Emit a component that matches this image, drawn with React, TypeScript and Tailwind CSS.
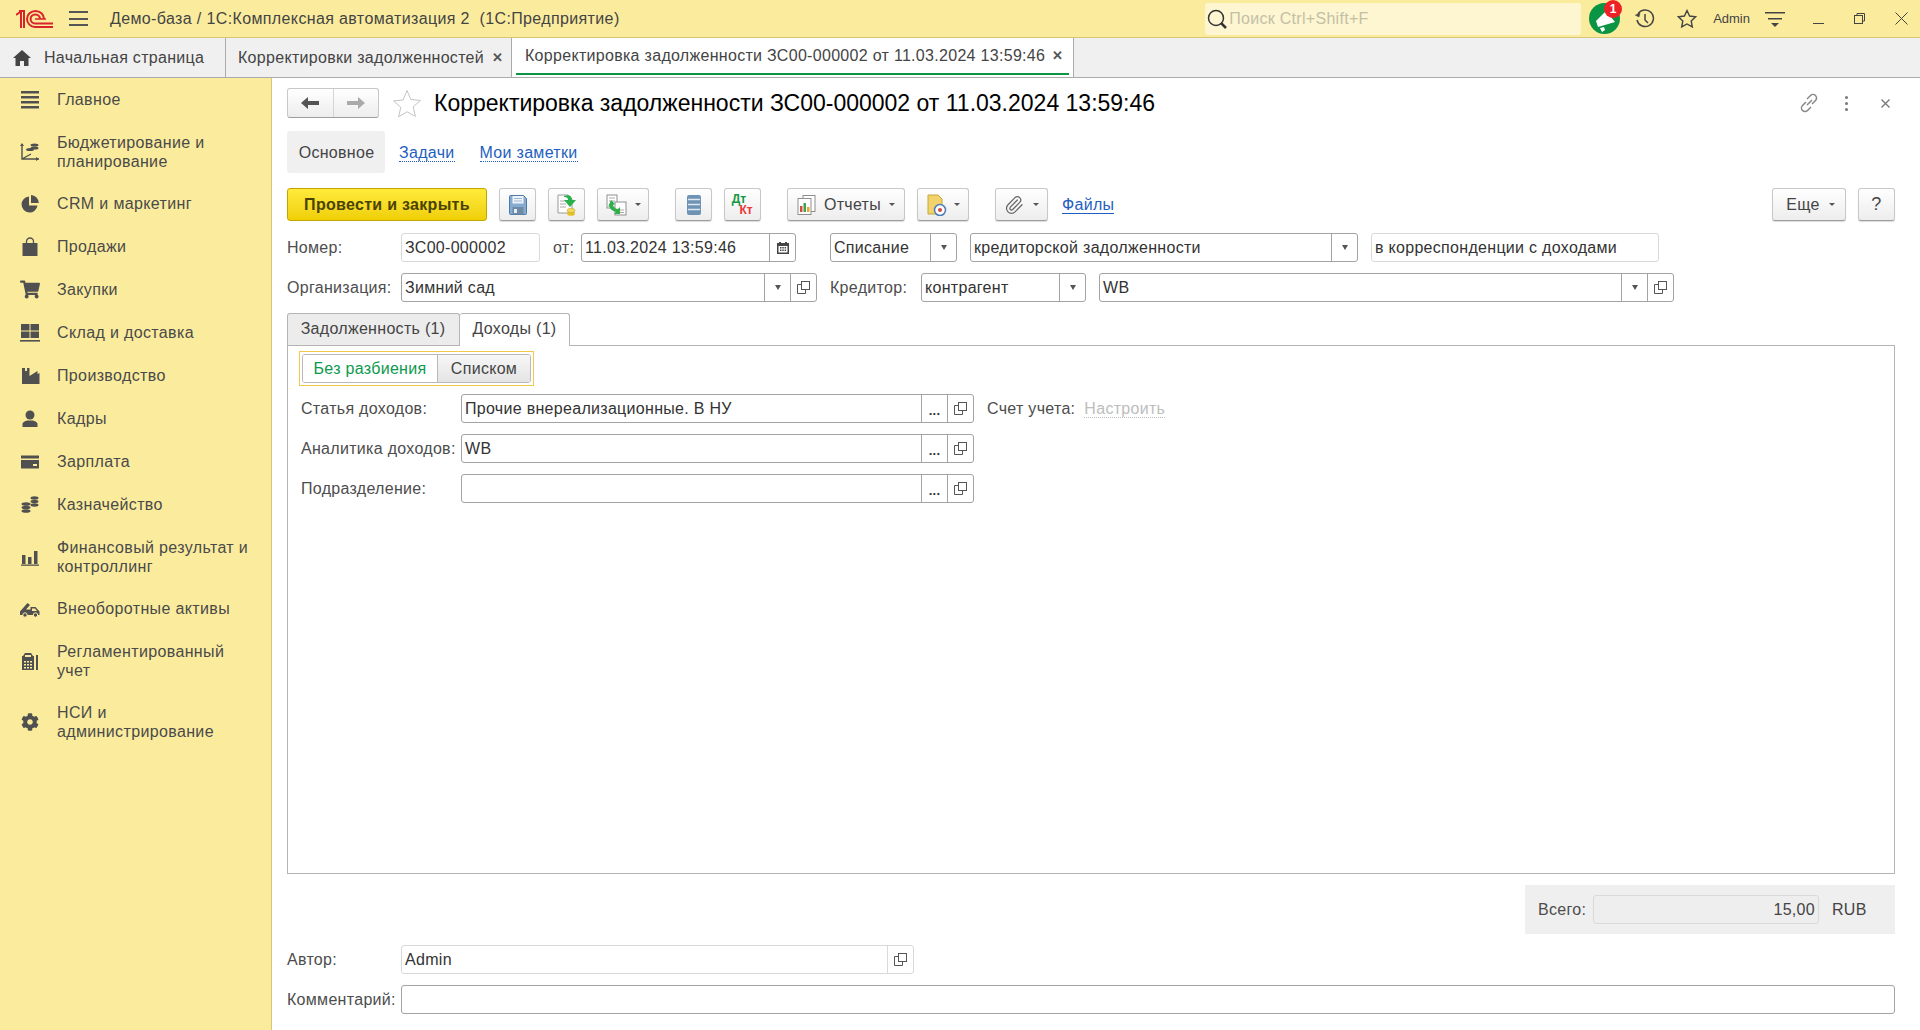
import { FaCog, FaShoppingCart } from "react-icons/fa";
import { Paperclip } from "lucide-react";
import type { ReactNode } from "react";

const navItems = [
  { label: ["Главное"], icon: "menu" },
  { label: ["Бюджетирование и", "планирование"], icon: "budget" },
  { label: ["CRM и маркетинг"], icon: "pie" },
  { label: ["Продажи"], icon: "bag" },
  { label: ["Закупки"], icon: "cart" },
  { label: ["Склад и доставка"], icon: "stock" },
  { label: ["Производство"], icon: "factory" },
  { label: ["Кадры"], icon: "person" },
  { label: ["Зарплата"], icon: "card" },
  { label: ["Казначейство"], icon: "coins" },
  { label: ["Финансовый результат и", "контроллинг"], icon: "bars" },
  { label: ["Внеоборотные активы"], icon: "truck" },
  { label: ["Регламентированный", "учет"], icon: "calc" },
  { label: ["НСИ и", "администрирование"], icon: "gear" },
];

function NavIcon({ name }: { name: string }) {
  if (name === "cart") return <FaShoppingCart className="h-[19px] w-[20px] text-[#505050]" />;
  if (name === "gear") return <FaCog className="ml-[1px] h-[18px] w-[18px] text-[#505050]" />;
  return (
    <svg viewBox="0 0 20 20" className="h-5 w-5 shrink-0" fill="#505050">
      {name === "menu" && (
        <>
          <rect x="1" y="1" width="18" height="2.500" />
          <rect x="1" y="6" width="18" height="2.500" />
          <rect x="1" y="11" width="18" height="2.500" />
          <rect x="1" y="16" width="18" height="2.500" />
        </>
      )}
      {name === "budget" && (
        <>
          <path d="M2 2v15h17M2 17l9-5" fill="none" stroke="#505050" strokeWidth="1.400" />
          <path d="M0 4l2-3 2 3zM16 15l3 2-3 2z" />
          <ellipse cx="14.500" cy="3" rx="4" ry="1.600" />
          <ellipse cx="14.500" cy="6" rx="4" ry="1.600" />
          <ellipse cx="10" cy="7.500" rx="4" ry="1.600" />
        </>
      )}
      {name === "pie" && (
        <>
          <path d="M9 2.500a8 8 0 1 0 8.500 9H9z" />
          <path d="M11 1a8 8 0 0 1 7.800 8H11z" />
        </>
      )}
      {name === "bag" && (
        <>
          <rect x="2.500" y="6" width="15" height="13" />
          <path d="M6.500 8V4.500a3.500 3.500 0 0 1 7 0V8" fill="none" stroke="#505050" strokeWidth="1.300" />
        </>
      )}
      {name === "stock" && (
        <>
          <rect x="1" y="1" width="8.500" height="6.500" />
          <rect x="10.500" y="1" width="8.500" height="6.500" />
          <rect x="1" y="8.500" width="8.500" height="6.500" />
          <rect x="10.500" y="8.500" width="8.500" height="6.500" />
          <rect x="0" y="17" width="20" height="1.600" />
        </>
      )}
      {name === "factory" && <path d="M2 18V2h3v3h2V2h2.500v8l8-5v3l2-1v11z" />}
      {name === "person" && (
        <>
          <circle cx="10" cy="6" r="4.500" />
          <path d="M2.500 18v-3c0-2 3-3 4.500-3.500h6c1.500.5 4.500 1.500 4.500 3.500v3z" />
        </>
      )}
      {name === "card" && (
        <>
          <path d="M1 3.500h18v3H1z" />
          <path d="M1 8h18v8.500H1zM13 12v2h4v-2z" fillRule="evenodd" />
        </>
      )}
      {name === "coins" && (
        <>
          <ellipse cx="14.500" cy="3" rx="4" ry="1.700" />
          <ellipse cx="14.500" cy="6.500" rx="4" ry="1.700" />
          <ellipse cx="14.500" cy="10" rx="4" ry="1.700" />
          <ellipse cx="6" cy="9" rx="4.500" ry="1.800" />
          <ellipse cx="6" cy="12.500" rx="4.500" ry="1.800" />
          <ellipse cx="6" cy="16" rx="4.500" ry="1.800" />
        </>
      )}
      {name === "bars" && (
        <>
          <rect x="2" y="8" width="3.500" height="9" />
          <rect x="8" y="10" width="3.500" height="7" />
          <rect x="14" y="4" width="3.500" height="13" />
          <rect x="1" y="17.500" width="18" height="1.300" />
        </>
      )}
      {name === "truck" && (
        <>
          <path d="M0 12.500L7.500 4 10 6 6 10.500h4.500V8h5l4 4.500V16H0z" />
          <path d="M12 9.500h3l2 2.500h-5z" fill="#fbec9d" />
          <circle cx="5" cy="16" r="2.200" stroke="#fbec9d" />
          <circle cx="15.500" cy="16" r="2.200" stroke="#fbec9d" />
        </>
      )}
      {name === "calc" && (
        <>
          <path d="M3 5l2-3h6l2 3h1v14H2V5z" />
          <rect x="5" y="4" width="6" height="2" fill="#fbec9d" />
          <path d="M4 10h2v1.500H4zM7 10h2v1.500H7zM10 10h2v1.500h-2zM4 13h2v1.500H4zM7 13h2v1.500H7zM10 13h2v1.500h-2zM4 16h2v1.500H4zM7 16h2v1.500H7zM10 16h2v1.500h-2z" fill="#fbec9d" />
          <rect x="16" y="4" width="2" height="15" />
        </>
      )}
    </svg>
  );
}

function CopyIcon() {
  return (
    <svg viewBox="0 0 13 13" className="h-[13px] w-[13px]" fill="none" stroke="#555" strokeWidth="1">
      <rect x="4.500" y="0.500" width="8" height="8" />
      <path d="M4.500 3.500h-4v9h8v-4" />
    </svg>
  );
}

function Caret() {
  return <span className="h-0 w-0 border-x-[3.500px] border-t-[5px] border-x-transparent border-t-[#555]" />;
}

function SmallCaret() {
  return <span className="h-0 w-0 border-x-[3px] border-t-[3px] border-x-transparent border-t-[#555]" />;
}

function FieldPart({ className, children }: { className: string; children: ReactNode }) {
  return <span className={`flex h-full shrink-0 items-center justify-center border-l border-inherit ${className}`}>{children}</span>;
}

function Field({
  className,
  text,
  light,
  parts,
}: {
  className: string;
  text?: string;
  light?: boolean;
  parts?: ReactNode;
}) {
  return (
    <div
      className={`flex h-[29px] shrink-0 items-center rounded-[3px] border bg-white text-[#333] ${
        light ? "border-[#d9d9d9]" : "border-[#a3a3a3]"
      } ${className}`}
    >
      <span className="min-w-0 flex-1 truncate pl-[3px] leading-[20px]">{text}</span>
      {parts}
    </div>
  );
}

const dropPart = (
  <FieldPart className="w-[26px]">
    <Caret />
  </FieldPart>
);
const copyPart = (
  <FieldPart className="w-[26px]">
    <CopyIcon />
  </FieldPart>
);
const dotsPart = (
  <FieldPart className="w-[26px] items-end pb-[5px] text-[13px] font-bold leading-none">...</FieldPart>
);

function ToolButton({ className, children }: { className: string; children: ReactNode }) {
  return (
    <button className={`flex h-[33px] shrink-0 items-center justify-center rounded-[3px] border border-[#c8c8c8] border-b-[#9e9e9e] bg-linear-to-b from-white to-[#ededed] text-[#444] shadow-[0_1px_1px_rgba(0,0,0,0.15)] ${className}`}>
      {children}
    </button>
  );
}

function Label({ className, children }: { className: string; children: ReactNode }) {
  return <span className={`shrink-0 whitespace-nowrap text-[#4d4d4d] ${className}`}>{children}</span>;
}

export default function App() {
  return (
    <div className="flex h-[1030px] w-[1920px] flex-col overflow-hidden bg-white font-['Liberation_Sans',Arial,sans-serif] text-[16px] tracking-[0.3px]">
      {/* top bar */}
      <header className="relative flex h-[38px] shrink-0 items-center border-b border-[#d6c678] bg-[#fbec9d] text-[#444]">
        <svg viewBox="0 0 37 18" className="ml-4 h-[18px] w-[37px]" fill="none" stroke="#d8242a" strokeWidth="2">
          <path d="M0 5l5-3.500V18M3 1h5v17" />
          <path d="M28 9A8.500 8 0 0 0 11 9a8 8 0 0 0 8 8h18" />
          <path d="M24 9a4.700 4.500 0 0 0-9.400 0 4.500 4.500 0 0 0 4.400 4.500h18" />
          <path d="M19 9h11" strokeWidth="1.500" />
        </svg>
        <span className="ml-[16px] flex h-[15px] w-[19px] flex-col justify-between">
          <span className="h-[2px] bg-[#555]" />
          <span className="h-[2px] bg-[#555]" />
          <span className="h-[2px] bg-[#555]" />
        </span>
        <span className="ml-[22px] whitespace-pre tracking-[0.37px]">Демо-база / 1С:Комплексная автоматизация 2  (1С:Предприятие)</span>

        <div className="ml-auto flex h-full items-center">
          <div className="flex h-[32px] w-[376px] items-center rounded-[3px] bg-[#fdf6d1]">
            <svg viewBox="0 0 20 20" className="ml-[2px] h-5 w-5" fill="none" stroke="#333">
              <circle cx="9" cy="9" r="7.500" strokeWidth="1.500" />
              <path d="M14 14l5 5" strokeWidth="2.500" />
            </svg>
            <span className="ml-[2px] text-[#c4c0a6]">Поиск Ctrl+Shift+F</span>
          </div>
          <div className="relative ml-[8px] h-[31px] w-[31px] rounded-full bg-[#0a9444]">
            <svg viewBox="0 0 31 31" className="h-[31px] w-[31px]" fill="white">
              <path d="M17 8L7 18l2 6 17-5z" />
              <path d="M11 25l4-1 1 3-3 2z" />
            </svg>
            <span className="absolute -right-[2px] -top-[3px] flex h-[18px] w-[18px] items-center justify-center rounded-full bg-[#ee2127] text-[12px] font-bold leading-none text-white">
              1
            </span>
          </div>
          <svg viewBox="0 0 20 20" className="ml-[15px] h-5 w-5" fill="none" stroke="#444" strokeWidth="1.500">
            <path d="M3 5a8.300 8.300 0 1 1-1 6" />
            <path d="M0 6l4 2 1-4" fill="#444" strokeWidth="0.500" />
            <path d="M10 5v6l3 3" />
          </svg>
          <svg viewBox="0 0 20 20" className="ml-[22px] h-5 w-5" fill="none" stroke="#444" strokeWidth="1.400">
            <path d="M10 1.500l2.600 5.500 6 .8-4.400 4.100 1.100 6L10 15l-5.300 2.900 1.100-6L1.400 7.800l6-.8z" />
          </svg>
          <span className="ml-[16px] text-[13px] leading-none tracking-normal">Admin</span>
          <svg viewBox="0 0 20 16" className="ml-[15px] h-4 w-5" fill="#444">
            <rect x="0" y="1" width="20" height="1.500" />
            <rect x="3" y="7" width="14" height="1.500" />
            <path d="M6 12h8l-4 4z" />
          </svg>
          <span className="ml-[28px] mt-[10px] h-[1px] w-[11px] bg-[#444]" />
          <svg viewBox="0 0 11 11" className="ml-[30px] h-[11px] w-[11px]" fill="none" stroke="#444">
            <rect x="0.500" y="2.500" width="8" height="8" />
            <path d="M3 2.500V.500h7.500v7.500H8.500" />
          </svg>
          <svg viewBox="0 0 13 13" className="ml-[30px] mr-[12px] h-[13px] w-[13px]" fill="none" stroke="#444">
            <path d="M.500.500l12 12M12.500.500l-12 12" />
          </svg>
        </div>
      </header>

      {/* open tabs */}
      <nav className="flex h-[40px] shrink-0 border-b border-[#ababab] bg-[#f0f0f0] text-[#444]">
        <div className="flex w-[226px] items-center border-r border-[#ababab]">
          <svg viewBox="0 0 18 16" className="ml-[13px] h-4 w-[18px]" fill="#444">
            <path d="M9 0l9 8h-2.500v8H11v-5H7v5H2.500V8H0z" />
          </svg>
          <span className="ml-[13px]">Начальная страница</span>
        </div>
        <div className="flex w-[286px] items-center border-r border-[#ababab] pl-[12px]">
          <span>Корректировки задолженностей</span>
          <span className="ml-[8px] text-[13px] font-bold leading-none text-[#555]">✕</span>
        </div>
        <div className="w-[562px] border-r border-[#ababab] bg-white px-[4px] pb-[2px]">
          <div className="flex h-full items-center border-b-[2px] border-[#0a9444] pl-[9px]">
            <span className="whitespace-nowrap">Корректировка задолженности ЗС00-000002 от 11.03.2024 13:59:46</span>
            <span className="ml-[7px] text-[13px] font-bold leading-none text-[#555]">✕</span>
          </div>
        </div>
      </nav>

      <div className="flex min-h-0 flex-1">
        {/* section menu */}
        <aside className="w-[272px] shrink-0 border-r border-[#d6c678] bg-[#fbec9d] tracking-[0.36px] text-[#4a4a4a]">
          {navItems.map((item) => (
            <div
              key={item.label[0]}
              className={`flex items-center pl-[20px] pt-[12px] ${item.label.length > 1 ? "pb-[11px]" : "pb-[12px]"}`}
            >
              <span className="flex h-[19px] w-[37px] shrink-0 items-center">
                <NavIcon name={item.icon} />
              </span>
              <span className="leading-[19px]">
                {item.label.map((line) => (
                  <span key={line} className="block whitespace-nowrap">
                    {line}
                  </span>
                ))}
              </span>
            </div>
          ))}
        </aside>

        {/* document form */}
        <main className="flex min-w-0 flex-1 flex-col pl-[15px] pr-[25px] pt-[10px]">
          <div className="flex h-[30px] shrink-0 items-center">
            <div className="flex h-[30px] w-[92px] rounded-[3px] border border-[#c8c8c8] border-b-[#9e9e9e] bg-linear-to-b from-white to-[#ededed]">
              <span className="flex flex-1 items-center justify-center border-r border-[#d5d5d5] text-[#555]">
                <svg viewBox="0 0 18 12" className="h-3 w-[18px]" fill="currentColor">
                  <path d="M0 6l7-6v4h11v4H7v4z" />
                </svg>
              </span>
              <span className="flex flex-1 items-center justify-center">
                <svg viewBox="0 0 18 12" className="h-3 w-[18px]" fill="#aaa">
                  <path d="M18 6l-7-6v4H0v4h11v4z" />
                </svg>
              </span>
            </div>
            <svg viewBox="0 0 30 29" className="ml-[13px] h-[29px] w-[30px]" fill="none" stroke="#c4c4c4">
              <path d="M15 1.500l3.900 9 9.600.9-7.300 6.400 2.200 9.500L15 22.800l-8.400 5 2.200-9.500-7.300-6.400 9.600-.9z" />
            </svg>
            <h1 className="ml-[12px] whitespace-nowrap text-[23px] font-normal leading-none tracking-normal text-black">
              Корректировка задолженности ЗС00-000002 от 11.03.2024 13:59:46
            </h1>
            <div className="ml-auto flex items-center text-[#888]">
              <svg viewBox="0 0 20 20" className="h-5 w-5" fill="none" stroke="#888" strokeWidth="1.500">
                <path d="M8 12l5-5M7 9l-3.500 3.500a3.500 3.500 0 0 0 5 5L12 14M13 11l3.500-3.500a3.500 3.500 0 0 0-5-5L8 6" />
              </svg>
              <span className="ml-[26px] flex flex-col gap-[3px]">
                <span className="h-[3px] w-[3px] rounded-full bg-[#777]" />
                <span className="h-[3px] w-[3px] rounded-full bg-[#777]" />
                <span className="h-[3px] w-[3px] rounded-full bg-[#777]" />
              </span>
              <svg viewBox="0 0 9 9" className="ml-[33px] mr-[5px] h-[9px] w-[9px]" fill="none" stroke="#777" strokeWidth="1.300">
                <path d="M.500.500l8 8M8.500.500l-8 8" />
              </svg>
            </div>
          </div>

          <div className="mt-[13px] flex h-[42px] shrink-0 items-center">
            <span className="flex h-full w-[98px] items-center justify-center rounded-[3px] bg-[#f0f0f0] pl-[1px] pt-[1px] text-[#444]">Основное</span>
            <a className="ml-[14px] mt-[2px] border-b border-dotted border-[#1f5fc0] leading-[17px] text-[#1f5fc0]">Задачи</a>
            <a className="ml-[25px] mt-[2px] border-b border-dotted border-[#1f5fc0] leading-[17px] text-[#1f5fc0]">Мои заметки</a>
          </div>

          {/* toolbar */}
          <div className="mt-[15px] flex h-[33px] shrink-0 items-center">
            <button className="flex h-[33px] w-[200px] items-center justify-center rounded-[3px] border border-[#c2a600] bg-linear-to-b from-[#ffeb3a] to-[#f0cf00] font-bold text-[#4a4300]">
              Провести и закрыть
            </button>
            <ToolButton className="ml-[12px] w-[37px]">
              <svg viewBox="0 0 18 20" className="h-5 w-[18px]">
                <path d="M1.500.5h13l3 3v15a1 1 0 0 1-1 1h-15a1 1 0 0 1-1-1v-17a1 1 0 0 1 1-1z" fill="#86abd3" stroke="#4f7aa8" />
                <rect x="3.500" y="1" width="11" height="7.500" fill="#eef3f9" />
                <path d="M5 3.500h8M5 6h8" stroke="#9db8d4" />
                <rect x="3.500" y="12" width="11" height="7.500" fill="#6f8aa5" />
                <rect x="5" y="14" width="3" height="4" fill="#e5edf5" />
              </svg>
            </ToolButton>
            <ToolButton className="ml-[12px] w-[37px]">
              <svg viewBox="0 0 20 22" className="h-[22px] w-5">
                <path d="M1 1h10l4 4v14H1z" fill="#fff" stroke="#999" />
                <path d="M3 7h6M3 10h6M3 13h6" stroke="#a9a9a9" />
                <ellipse cx="14" cy="19.500" rx="4" ry="2.300" fill="#e6c12c" />
                <ellipse cx="14" cy="16.500" rx="4" ry="2.200" fill="#f1d860" stroke="#c29f12" strokeWidth="0.500" />
                <path d="M7 2c5-2 8 0 8 4h4l-6 7-6-7h4c0-2-1-3-4-3z" fill="#27b04b" />
              </svg>
            </ToolButton>
            <ToolButton className="ml-[12px] w-[52px] gap-[8px]">
              <svg viewBox="0 0 21 22" className="h-[22px] w-[21px]">
                <rect x="1" y="1" width="10" height="13" fill="#fff" stroke="#8f8f8f" />
                <path d="M3 4h6M3 7h6" stroke="#aaa" />
                <rect x="9" y="8" width="11" height="13" fill="#fff" stroke="#8f8f8f" />
                <path d="M12 16h6M12 18.500h6" stroke="#aaa" />
                <path d="M5 6l4 4-2 1c1 3 3 4 5 4l2-2v7h-6l2-2c-4-1-6-3-7-6l-1 1z" fill="#2fae4a" />
              </svg>
              <SmallCaret />
            </ToolButton>
            <ToolButton className="ml-[26px] w-[37px]">
              <svg viewBox="0 0 14 20" className="h-5 w-[14px]">
                <rect x="0" y="0" width="14" height="20" rx="2" fill="#6f93b5" />
                <path d="M1 4.500h12M1 9.500h12M1 14.500h12" stroke="#dfe8f0" strokeWidth="1.600" />
              </svg>
            </ToolButton>
            <ToolButton className="ml-[12px] w-[37px]">
              <span className="flex flex-col items-center text-[12px] font-bold leading-[11px] tracking-normal">
                <span className="mr-[7px] text-[#11993f]">Дт</span>
                <span className="ml-[7px] text-[#ee3838]">Кт</span>
              </span>
            </ToolButton>
            <ToolButton className="ml-[26px] w-[118px]">
              <svg viewBox="0 0 20 20" className="h-5 w-5">
                <rect x="6" y="0.500" width="12" height="16" fill="#fff" stroke="#8f8f8f" />
                <rect x="1" y="3.500" width="13" height="16" fill="#fff" stroke="#8f8f8f" />
                <rect x="3" y="11" width="2.500" height="6" fill="#d94a3a" />
                <rect x="6.500" y="8" width="2.500" height="9" fill="#3aa655" />
                <rect x="10" y="12" width="2.500" height="5" fill="#e0a82c" />
              </svg>
              <span className="ml-[7px]">Отчеты</span>
              <span className="ml-[8px] flex">
                <SmallCaret />
              </span>
            </ToolButton>
            <ToolButton className="ml-[12px] w-[52px] gap-[7px]">
              <svg viewBox="0 0 20 22" className="h-[22px] w-5">
                <path d="M1 1h10l4 4v15H1z" fill="#f2d26b" stroke="#c7a63a" />
                <circle cx="13" cy="16" r="5.500" fill="#fff" stroke="#4b7fb5" strokeWidth="1.500" />
                <circle cx="13" cy="16" r="2" fill="#d9483b" />
              </svg>
              <SmallCaret />
            </ToolButton>
            <ToolButton className="ml-[26px] w-[53px] gap-[9px]">
              <Paperclip className="h-5 w-5 text-[#666]" strokeWidth={1.5} />
              <SmallCaret />
            </ToolButton>
            <a className="ml-[14px] border-b border-[#1f5fc0] leading-[17px] text-[#1f5fc0]">Файлы</a>
            <ToolButton className="ml-auto w-[74px] gap-[9px] pl-[3px]">
              Еще
              <SmallCaret />
            </ToolButton>
            <ToolButton className="ml-[12px] w-[37px] text-[18px] text-[#333]">?</ToolButton>
          </div>

          {/* header fields */}
          <div className="mt-[12px] flex h-[29px] shrink-0 items-center">
            <Label className="w-[114px]">Номер:</Label>
            <Field light className="w-[139px]" text="ЗС00-000002" />
            <Label className="ml-[13px] w-[28px]">от:</Label>
            <Field
              className="w-[215px]"
              text="11.03.2024 13:59:46"
              parts={
                <FieldPart className="w-[26px]">
                  <svg viewBox="0 0 12 12" className="h-3 w-3" fill="#444">
                    <path d="M2 0h2v1h4V0h2v1h2v11H0V1h2zM1.500 4v6.500h9V4z" fillRule="evenodd" />
                    <path d="M3 5h1.500v1.500H3zM5.300 5h1.500v1.500H5.300zM7.600 5h1.500v1.500H7.600zM3 7.500h1.500V9H3zM5.300 7.500h1.500V9H5.300zM7.600 7.500h1.500V9H7.600z" />
                  </svg>
                </FieldPart>
              }
            />
            <Field className="ml-[34px] w-[127px]" text="Списание" parts={dropPart} />
            <Field className="ml-[13px] w-[388px]" text="кредиторской задолженности" parts={dropPart} />
            <Field light className="ml-[13px] w-[288px]" text="в корреспонденции с доходами" />
          </div>

          <div className="mt-[11px] flex h-[29px] shrink-0 items-center">
            <Label className="w-[114px]">Организация:</Label>
            <Field
              className="w-[416px]"
              text="Зимний сад"
              parts={
                <>
                  {dropPart}
                  {copyPart}
                </>
              }
            />
            <Label className="ml-[13px] w-[91px]">Кредитор:</Label>
            <Field className="w-[165px]" text="контрагент" parts={dropPart} />
            <Field
              className="ml-[13px] w-[575px]"
              text="WB"
              parts={
                <>
                  {dropPart}
                  {copyPart}
                </>
              }
            />
          </div>

          {/* document tabs */}
          <div className="mt-[11px] flex h-[32px] shrink-0 items-stretch">
            <span className="flex w-[173px] items-center justify-center rounded-t-[3px] border border-b-0 border-[#b4b4b4] bg-[#ececec] pb-[2px] pr-[1px] text-[#444]">
              Задолженность (1)
            </span>
            <span className="z-10 -mb-px flex w-[110px] items-center justify-center rounded-t-[3px] border border-b-0 border-l-0 border-[#b4b4b4] bg-white pb-[2px] text-[#444]">
              Доходы (1)
            </span>
          </div>

          <section className="h-[529px] shrink-0 border border-[#b4b4b4] px-[11px] pt-[5px]">
            <div className="flex h-[35px] w-[235px] items-center border border-[#f2c94c] px-[2px]">
              <div className="flex h-[29px] w-[229px] overflow-hidden rounded-[3px] border border-[#b9b9b9]">
                <span className="flex w-[134px] items-center justify-center bg-white text-[#0b9a4d]">Без разбиения</span>
                <span className="flex flex-1 items-center justify-center border-l border-[#b9b9b9] bg-linear-to-b from-[#f7f7f7] to-[#e4e4e4] text-[#444]">Списком</span>
              </div>
            </div>

            <div className="ml-[2px] mt-[8px] flex flex-col gap-[11px]">
              <div className="flex items-center">
                <Label className="w-[160px]">Статья доходов:</Label>
                <Field
                  className="w-[513px]"
                  text="Прочие внереализационные. В НУ"
                  parts={
                    <>
                      {dotsPart}
                      {copyPart}
                    </>
                  }
                />
                <Label className="ml-[13px]">Счет учета:</Label>
                <a className="ml-[9px] border-b border-dotted border-[#bdbdbd] leading-[17px] text-[#bdbdbd]">Настроить</a>
              </div>
              <div className="flex items-center">
                <Label className="w-[160px]">Аналитика доходов:</Label>
                <Field
                  className="w-[513px]"
                  text="WB"
                  parts={
                    <>
                      {dotsPart}
                      {copyPart}
                    </>
                  }
                />
              </div>
              <div className="flex items-center">
                <Label className="w-[160px]">Подразделение:</Label>
                <Field
                  className="w-[513px]"
                  parts={
                    <>
                      {dotsPart}
                      {copyPart}
                    </>
                  }
                />
              </div>
            </div>
          </section>

          <div className="mt-[11px] flex h-[49px] w-[370px] shrink-0 items-center self-end bg-[#efefef] pl-[13px]">
            <Label className="w-[55px]">Всего:</Label>
            <div className="flex h-[29px] w-[226px] items-center justify-end rounded-[3px] border border-[#d9d9d9] bg-[#eeeeee] pr-[3px] text-[#444]">15,00</div>
            <span className="ml-[13px] text-[#444]">RUB</span>
          </div>

          <div className="mt-[11px] flex h-[29px] shrink-0 items-center">
            <Label className="w-[114px]">Автор:</Label>
            <Field light className="w-[513px]" text="Admin" parts={copyPart} />
          </div>
          <div className="mt-[11px] flex h-[29px] shrink-0 items-center">
            <Label className="w-[114px]">Комментарий:</Label>
            <Field className="flex-1" />
          </div>
        </main>
      </div>
    </div>
  );
}
